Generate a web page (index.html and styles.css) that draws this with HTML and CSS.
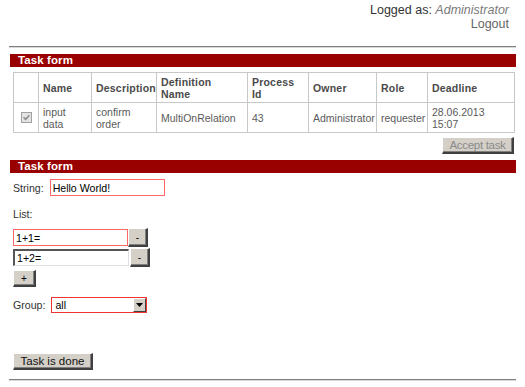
FILE: index.html
```html
<!DOCTYPE html>
<html>
<head>
<meta charset="utf-8">
<link rel="stylesheet" href="styles.css">
</head>
<body>
<div class="page">
  <div class="userbar">
    <div>Logged as: <em class="user">Administrator</em></div>
    <div class="logout">Logout</div>
  </div>
  <div class="rule"></div>

  <section class="panel">
    <h2 class="bar">Task form</h2>
    <table class="tasks">
      <tr>
        <th class="c-check"></th>
        <th class="c-name">Name</th>
        <th class="c-desc">Description</th>
        <th class="c-def">Definition<br>Name</th>
        <th class="c-pid">Process<br>Id</th>
        <th class="c-owner">Owner</th>
        <th class="c-role">Role</th>
        <th class="c-dl">Deadline</th>
      </tr>
      <tr>
        <td class="c-check"><span class="checkbox"><svg width="7" height="7" viewBox="0 0 7 7"><path d="M0.5 3.2 L2.6 5.4 L6.5 1.2" fill="none" stroke="#8a8a8a" stroke-width="1.6"/></svg></span></td>
        <td>input<br>data</td>
        <td>confirm<br>order</td>
        <td>MultiOnRelation</td>
        <td>43</td>
        <td>Administrator</td>
        <td>requester</td>
        <td>28.06.2013<br>15:07</td>
      </tr>
    </table>
    <div class="actions"><button class="btn btn-disabled">Accept task</button></div>
  </section>

  <section class="panel">
    <h2 class="bar">Task form</h2>
    <div class="form">
      <div class="row row-string">
        <span class="label">String:</span>
        <span class="input input-invalid input-string">Hello World!</span>
      </div>
      <div class="label list-label">List:</div>
      <div class="row row-item">
        <span class="input input-invalid input-item">1+1=</span>
        <button class="btn btn-small">-</button>
      </div>
      <div class="row row-item">
        <span class="input input-inset input-item2">1+2=</span>
        <button class="btn btn-small btn-small2">-</button>
      </div>
      <button class="btn btn-plus">+</button>
      <div class="row row-group">
        <span class="label">Group:</span>
        <span class="select">
          <span class="select-value">all</span>
          <span class="select-arrow"><svg width="7" height="4" viewBox="0 0 7 4"><path d="M0 0 H7 L3.5 4 Z" fill="#000"/></svg></span>
        </span>
      </div>
      <button class="btn btn-done">Task is done</button>
    </div>
  </section>
  <div class="rule rule-bottom"></div>
</div>
</body>
</html>
```

FILE: styles.css
```css
html, body {
  margin: 0;
  padding: 0;
  background: #ffffff;
}

body {
  font-family: "Liberation Sans", Arial, sans-serif;
  color: #333333;
}

.page {
  padding: 0 9px 0 9px;
}

.userbar {
  padding-top: 3px;
  padding-right: 7px;
  text-align: right;
  font-size: 12.5px;
  line-height: 14px;
  color: #333333;
}

.user {
  color: #7a7a7a;
}

.logout {
  color: #666666;
}

.rule {
  margin-top: 15px;
  height: 1px;
  background: #808080;
  border-bottom: 1px solid #d8d8d8;
}

.rule-bottom {
  margin-top: 9px;
}

.bar {
  margin: 6px 0 0 1px;
  height: 13px;
  padding-left: 8px;
  background: #990000;
  color: #ffffff;
  font-size: 11.5px;
  line-height: 13px;
  font-weight: bold;
  letter-spacing: 0.1px;
}

.tasks {
  margin: 5px 0 0 4px;
  border-collapse: collapse;
  width: 501px;
  table-layout: fixed;
  font-size: 10.5px;
}

.tasks th,
.tasks td {
  border: 1px solid #c8c8c8;
  height: 29px;
  padding: 0 0 0 4px;
  text-align: left;
  vertical-align: middle;
  line-height: 12px;
}

.tasks th {
  color: #4a4a4a;
  font-weight: bold;
  font-size: 10.5px;
  letter-spacing: 0.2px;
}

.tasks td {
  color: #5a5a5a;
}

.c-check { width: 20px; }
.c-name { width: 48px; }
.c-desc { width: 60px; }
.c-def { width: 86px; }
.c-pid { width: 56px; }
.c-owner { width: 63px; }
.c-role { width: 46px; }
.c-dl { width: 82px; }

.checkbox {
  display: flex;
  align-items: center;
  justify-content: center;
  width: 9px;
  height: 9px;
  margin-left: 3px;
  border: 1px solid #a0a0a0;
  background: #e4e4e4;
}

.actions {
  display: flex;
  justify-content: flex-end;
  padding-right: 2px;
  margin-top: 4px;
}

.btn {
  font-family: "Liberation Sans", Arial, sans-serif;
  background: #d4d0c8;
  border-style: solid;
  border-width: 1px 2px 2px 1px;
  border-color: #ffffff #404040 #404040 #ffffff;
  box-shadow: inset -1px -1px 0 #808080;
  color: #000000;
  padding: 0;
  margin: 0;
  box-sizing: border-box;
  display: block;
}

.btn-disabled {
  width: 72px;
  height: 17px;
  font-size: 11.5px;
  color: #8a8a8a;
  letter-spacing: -0.3px;
}

.form {
  padding-left: 4px;
  font-size: 10.6px;
  color: #333333;
}

.row {
  display: flex;
  align-items: center;
}

.label {
  color: #333333;
}

.row-string {
  margin-top: 6px;
  gap: 6px;
}

.input {
  box-sizing: border-box;
  display: flex;
  align-items: center;
  background: #ffffff;
  color: #000000;
  font-size: 10.6px;
  padding-left: 2px;
}

.input-invalid {
  border: 1px solid #ff6666;
}

.input-inset {
  border-style: solid;
  border-width: 2px 1px 1px 2px;
  border-color: #555555 #e0e0e0 #e0e0e0 #555555;
}

.input-string {
  width: 115px;
  height: 17px;
}

.list-label {
  margin-top: 12px;
  height: 13px;
  line-height: 13px;
}

.list-label + .row-item {
  margin-top: 7px;
}

.input-item {
  width: 115px;
  height: 17px;
}

.input-item2 {
  width: 116px;
  height: 17px;
}

.btn-small {
  width: 20px;
  height: 19px;
  font-size: 10px;
  margin-left: 0;
}

.btn-small2 {
  margin-left: 1px;
}

.row-item + .row-item {
  margin-top: 1px;
}

.btn-plus {
  margin-top: 3px;
  width: 23px;
  height: 17px;
  font-size: 10px;
}

.row-group {
  margin-top: 10px;
  gap: 6px;
}

.select {
  box-sizing: border-box;
  width: 96px;
  height: 16px;
  border: 1px solid #ee3333;
  display: flex;
  align-items: stretch;
  background: #ffffff;
}

.select-value {
  flex: 1;
  padding-left: 3px;
  color: #000000;
  font-size: 10.6px;
  line-height: 14px;
}

.select-arrow {
  width: 13px;
  box-sizing: border-box;
  background: #d4d0c8;
  border-style: solid;
  border-width: 1px;
  border-color: #ffffff #404040 #404040 #ffffff;
  display: flex;
  align-items: center;
  justify-content: center;
}

.btn-done {
  margin-top: 40px;
  width: 80px;
  height: 17px;
  font-size: 11.5px;
  color: #111111;
}
```
